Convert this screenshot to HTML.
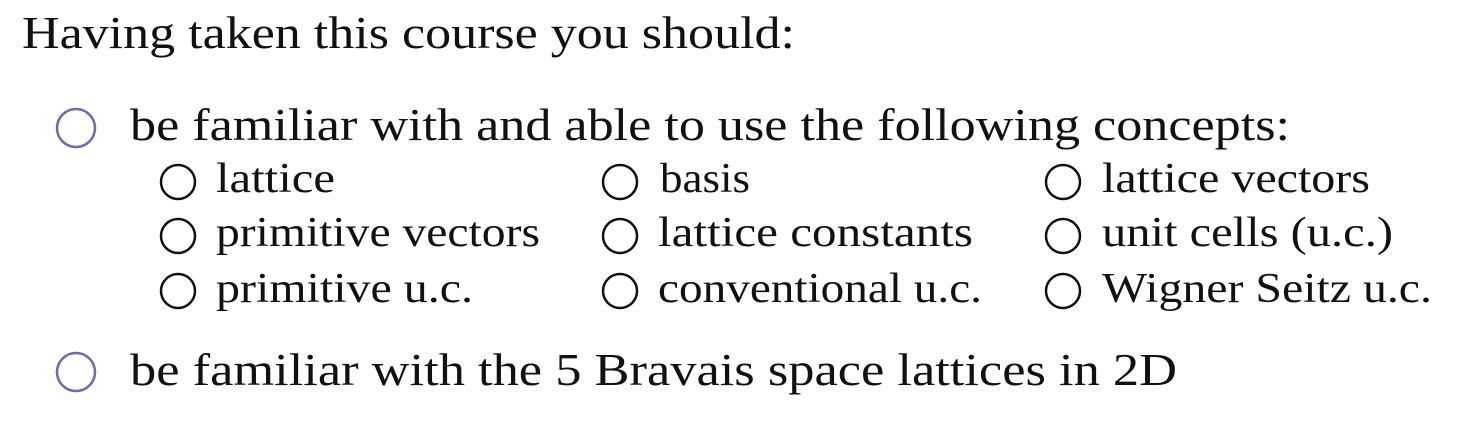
<!DOCTYPE html>
<html><head><meta charset="utf-8"><style>
html,body{margin:0;padding:0;background:#fff;}
svg{display:block}
text{font-family:"Liberation Serif",serif;fill:#111;}
</style></head><body>
<svg width="1462" height="436" viewBox="0 0 1462 436">
<g font-size="46">
<text x="22" y="48" textLength="773" lengthAdjust="spacingAndGlyphs">Having taken this course you should:</text>
<text x="130" y="140" textLength="1160" lengthAdjust="spacingAndGlyphs">be familiar with and able to use the following concepts:</text>
<text x="130" y="385" textLength="1047" lengthAdjust="spacingAndGlyphs">be familiar with the 5 Bravais space lattices in 2D</text>
</g>
<g fill="none" stroke="#6b6bb3" stroke-width="2.5">
<circle cx="76" cy="128" r="19"/><circle cx="76" cy="372" r="19"/>
</g>
<g fill="none" stroke="#111" stroke-width="2.5">
<circle cx="178" cy="182" r="17"/><circle cx="620" cy="182" r="17"/><circle cx="1063" cy="182" r="17"/>
<circle cx="178" cy="236" r="17"/><circle cx="620" cy="236" r="17"/><circle cx="1063" cy="236" r="17"/>
<circle cx="178" cy="291" r="17"/><circle cx="620" cy="291" r="17"/><circle cx="1063" cy="291" r="17"/>
</g>
<g font-size="42">
<text x="216" y="192" textLength="119" lengthAdjust="spacingAndGlyphs">lattice</text>
<text x="660" y="192" textLength="90" lengthAdjust="spacingAndGlyphs">basis</text>
<text x="1102" y="192" textLength="268" lengthAdjust="spacingAndGlyphs">lattice vectors</text>
<text x="216" y="246" textLength="324" lengthAdjust="spacingAndGlyphs">primitive vectors</text>
<text x="658" y="246" textLength="315" lengthAdjust="spacingAndGlyphs">lattice constants</text>
<text x="1102" y="246" textLength="291" lengthAdjust="spacingAndGlyphs">unit cells (u.c.)</text>
<text x="216" y="302" textLength="257" lengthAdjust="spacingAndGlyphs">primitive u.c.</text>
<text x="658" y="302" textLength="324" lengthAdjust="spacingAndGlyphs">conventional u.c.</text>
<text x="1102" y="302" textLength="330" lengthAdjust="spacingAndGlyphs">Wigner Seitz u.c.</text>
</g>
</svg>
</body></html>
